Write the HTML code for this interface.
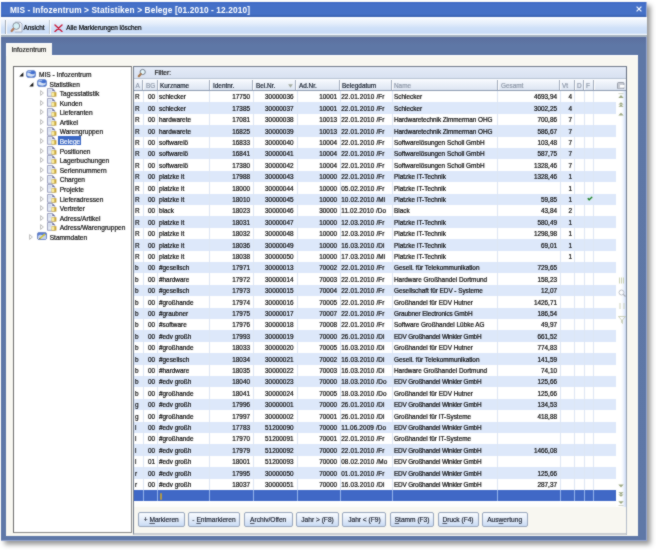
<!DOCTYPE html>
<html><head><meta charset="utf-8">
<style>
*{margin:0;padding:0;box-sizing:border-box}
html,body{width:656px;height:550px;overflow:hidden;background:#fff;font-family:"Liberation Sans",sans-serif;color:#000}
.a{position:absolute}
.tx{position:absolute;white-space:nowrap;line-height:1;-webkit-text-stroke:0.2px currentColor}
#shadowBox{left:1px;top:2px;width:646px;height:539px;background:#888;box-shadow:3px 3px 5px 0.5px rgba(0,0,0,0.42)}
#shadowR{left:647px;top:6px;width:6px;height:535px;background:linear-gradient(90deg,#8c8c8c,#c4c4c4 45%,#fff)}
#shadowB{left:5px;top:541px;width:642px;height:5px;background:linear-gradient(180deg,#8c8c8c,#c4c4c4 45%,#fff)}#shadowC{left:647px;top:541px;width:6px;height:5px;background:radial-gradient(circle at 0 0,#8c8c8c,#c4c4c4 45%,#fff 90%)}
#title{left:1px;top:2px;width:646px;height:15px;background:linear-gradient(180deg,#3d68c4,#4570c8 15%,#4571c6 80%,#3a62b0)}
#tb{left:1px;top:17px;width:646px;height:20px;background:linear-gradient(180deg,#ffffff 0,#f4f8fe 10%,#e6effb 30%,#cfe0f8 55%,#c9dcf7 80%,#dce8f8 86%,#fdfeff 88%,#fdfeff 90%,#a6b3c0 91%,#aab6c2 100%)}
#frame{left:1px;top:37px;width:646px;height:504px;background:linear-gradient(180deg,#5c6f9e,#5e77a6 8px,#5f78a7);border-right:1px solid #93a3cc;border-bottom:1px solid #93a3cc}
#tab{left:6px;top:43px;width:46px;height:13px;background:#f7f6f1;border-top:1px solid #fff;border-left:1px solid #fff}
#content{left:6px;top:55px;width:632px;height:481px;background:#f8f7f1;border-top:1px solid #fff}
#tree{left:13px;top:66px;width:119px;height:467px;background:#fff;border:1px solid #6d6d6d;border-right-color:#8a8a8a;border-bottom-color:#8a8a8a}
#grid{left:133px;top:66px;width:494px;height:469px;background:#f8f7f1;border:1px solid #727c8c;border-bottom:2px solid #c9cdd2}
#filter{left:134px;top:67px;width:492px;height:12px;background:linear-gradient(180deg,#e4ebf7,#d8e1f1);border-bottom:1px solid #b8c4d4}
#hdr{left:134px;top:79px;width:492px;height:12px;background:linear-gradient(180deg,#fbfcff,#eef3fa 35%,#dde5f2);border-bottom:1px solid #8f9cb2}
.hs{position:absolute;top:80px;width:2px;height:10px;background:#a3adbd;border-right:1px solid #fff}
.row{position:absolute;left:134px;width:482px}
.vl{position:absolute;width:1px;background:#dde6f4}
.c{font-size:6.4px;color:#0a0a0a}
.h{font-size:6.4px;color:#18202e}
.hg{font-size:6.4px;color:#8e98a8}
#rstrip{left:616px;top:91px;width:10px;height:416px;background:linear-gradient(90deg,#fff 0,#fff 50%,#f2f6fd 70%,#ccdaf4 100%)}
.btn{position:absolute;top:512px;height:15px;border:1px solid #98a6bd;border-radius:2px;background:linear-gradient(180deg,#f8fbff,#e6eefa 45%,#c9dbf4);font-size:6.6px;color:#141a28;text-align:center;line-height:14px;white-space:nowrap;-webkit-text-stroke:0.15px #141a28}.btn u{text-decoration:underline;text-decoration-thickness:0.6px;text-decoration-color:#505868;text-underline-offset:0.6px}
#root{position:absolute;left:0;top:0;width:656px;height:550px;overflow:hidden;background:#fff;will-change:transform}
#root{filter:url(#bl)}
</style></head><body><svg width="0" height="0" style="position:absolute"><filter id="bl" x="0" y="0" width="100%" height="100%" color-interpolation-filters="sRGB"><feConvolveMatrix order="3" kernelMatrix="1 2 1 2 16 2 1 2 1" divisor="28" edgeMode="duplicate"/></filter></svg><div id="root">

<div class="a" id="shadowBox"></div>
<div class="a" id="title"></div>
<div class="tx" style="left:10px;top:5.5px;font-weight:bold;font-size:8.3px;letter-spacing:0.12px;color:#fff;-webkit-text-stroke:0">MIS - Infozentrum &gt; Statistiken &gt; Belege [01.2010 - 12.2010]</div>
<svg class="a" style="left:636.4px;top:6.4px" width="6" height="6" viewBox="0 0 6 6"><path d="M0.6 0.6 L5.4 5.4 M5.4 0.6 L0.6 5.4" stroke="#f4f8ff" stroke-width="1.25"/></svg>
<div class="a" style="left:646px;top:2px;width:1px;height:539px;background:#9aaad6"></div>
<div class="a" id="tb"></div>
<div class="a" id="frame"></div>
<div class="a" id="content"></div>
<div class="a" id="tab"></div>
<div class="tx" style="left:11.5px;top:47px;font-size:6.6px;color:#222">Infozentrum</div>
<div class="tx" style="left:23.5px;top:24.6px;font-size:6.4px">Ansicht</div>
<div class="tx" style="left:66.3px;top:24.6px;font-size:6.4px">Alle Markierungen löschen</div>
<div class="a" id="tree"></div>
<div class="a" id="grid"></div>
<div class="a" id="filter"></div>
<div class="tx" style="left:154.5px;top:70px;font-size:6.6px;color:#1a1a1a">Filter:</div>
<div class="a" id="hdr"></div>
<div class="hs" style="left:142.0px"></div>
<div class="hs" style="left:157.0px"></div>
<div class="hs" style="left:209.0px"></div>
<div class="hs" style="left:252.0px"></div>
<div class="hs" style="left:295.0px"></div>
<div class="hs" style="left:339.0px"></div>
<div class="hs" style="left:391.0px"></div>
<div class="hs" style="left:497.0px"></div>
<div class="hs" style="left:559.0px"></div>
<div class="hs" style="left:574.0px"></div>
<div class="hs" style="left:583.0px"></div>
<div class="hs" style="left:593.0px"></div>
<div class="tx hg" style="left:135.5px;top:82.5px">A</div>
<div class="tx hg" style="left:146.0px;top:82.5px">BG</div>
<div class="tx h" style="left:160.0px;top:82.5px">Kurzname</div>
<div class="tx h" style="left:213.0px;top:82.5px">Identnr.</div>
<div class="tx h" style="left:256.0px;top:82.5px">Bel.Nr.</div>
<div class="tx h" style="left:299.0px;top:82.5px">Ad.Nr.</div>
<div class="tx h" style="left:342.0px;top:82.5px">Belegdatum</div>
<div class="tx hg" style="left:394.0px;top:82.5px">Name</div>
<div class="tx hg" style="left:501.0px;top:82.5px">Gesamt</div>
<div class="tx hg" style="left:562.0px;top:82.5px">Vt</div>
<div class="tx hg" style="left:577.0px;top:82.5px">D</div>
<div class="tx hg" style="left:586.0px;top:82.5px">F</div>
<svg class="a" style="left:287.5px;top:84px" width="5" height="4" viewBox="0 0 5 4"><path d="M0.2 0.2 H4.8 L2.5 3.8Z" fill="#a2a99c"/></svg>
<div class="row" style="top:91.00px;height:11.40px;background:#ffffff"></div>
<div class="tx c" style="left:135.0px;top:94.30px">R</div>
<div class="tx c" style="right:501.0px;top:94.30px">00</div>
<div class="tx c" style="left:159.0px;top:94.30px">schlecker</div>
<div class="tx c" style="right:406.0px;top:94.30px">17750</div>
<div class="tx c" style="right:362.5px;top:94.30px">30000036</div>
<div class="tx c" style="right:319.0px;top:94.30px">10001</div>
<div class="tx c" style="left:341.2px;top:94.30px;letter-spacing:0.13px">22.01.2010 /Fr</div>
<div class="tx c" style="left:394px;top:94.30px;letter-spacing:0px">Schlecker</div>
<div class="tx c" style="right:99.0px;top:94.30px">4693,94</div>
<div class="tx c" style="right:84.0px;top:94.30px">4</div>
<div class="row" style="top:102.40px;height:11.40px;background:#dde8fa"></div>
<div class="tx c" style="left:135.0px;top:105.70px">R</div>
<div class="tx c" style="right:501.0px;top:105.70px">00</div>
<div class="tx c" style="left:159.0px;top:105.70px">schlecker</div>
<div class="tx c" style="right:406.0px;top:105.70px">17385</div>
<div class="tx c" style="right:362.5px;top:105.70px">30000037</div>
<div class="tx c" style="right:319.0px;top:105.70px">10001</div>
<div class="tx c" style="left:341.2px;top:105.70px;letter-spacing:0.13px">22.01.2010 /Fr</div>
<div class="tx c" style="left:394px;top:105.70px;letter-spacing:0px">Schlecker</div>
<div class="tx c" style="right:99.0px;top:105.70px">3002,25</div>
<div class="tx c" style="right:84.0px;top:105.70px">4</div>
<div class="row" style="top:113.80px;height:11.40px;background:#ffffff"></div>
<div class="tx c" style="left:135.0px;top:117.10px">R</div>
<div class="tx c" style="right:501.0px;top:117.10px">00</div>
<div class="tx c" style="left:159.0px;top:117.10px">hardwarete</div>
<div class="tx c" style="right:406.0px;top:117.10px">17081</div>
<div class="tx c" style="right:362.5px;top:117.10px">30000038</div>
<div class="tx c" style="right:319.0px;top:117.10px">10013</div>
<div class="tx c" style="left:341.2px;top:117.10px;letter-spacing:0.13px">22.01.2010 /Fr</div>
<div class="tx c" style="left:394px;top:117.10px;letter-spacing:-0.06px">Hardwaretechnik Zimmerman OHG</div>
<div class="tx c" style="right:99.0px;top:117.10px">700,86</div>
<div class="tx c" style="right:84.0px;top:117.10px">7</div>
<div class="row" style="top:125.20px;height:11.40px;background:#dde8fa"></div>
<div class="tx c" style="left:135.0px;top:128.50px">R</div>
<div class="tx c" style="right:501.0px;top:128.50px">00</div>
<div class="tx c" style="left:159.0px;top:128.50px">hardwarete</div>
<div class="tx c" style="right:406.0px;top:128.50px">16825</div>
<div class="tx c" style="right:362.5px;top:128.50px">30000039</div>
<div class="tx c" style="right:319.0px;top:128.50px">10013</div>
<div class="tx c" style="left:341.2px;top:128.50px;letter-spacing:0.13px">22.01.2010 /Fr</div>
<div class="tx c" style="left:394px;top:128.50px;letter-spacing:-0.06px">Hardwaretechnik Zimmerman OHG</div>
<div class="tx c" style="right:99.0px;top:128.50px">586,67</div>
<div class="tx c" style="right:84.0px;top:128.50px">7</div>
<div class="row" style="top:136.60px;height:11.40px;background:#ffffff"></div>
<div class="tx c" style="left:135.0px;top:139.90px">R</div>
<div class="tx c" style="right:501.0px;top:139.90px">00</div>
<div class="tx c" style="left:159.0px;top:139.90px">softwarelö</div>
<div class="tx c" style="right:406.0px;top:139.90px">16833</div>
<div class="tx c" style="right:362.5px;top:139.90px">30000040</div>
<div class="tx c" style="right:319.0px;top:139.90px">10004</div>
<div class="tx c" style="left:341.2px;top:139.90px;letter-spacing:0.13px">22.01.2010 /Fr</div>
<div class="tx c" style="left:394px;top:139.90px;letter-spacing:0px">Softwarelösungen Scholl GmbH</div>
<div class="tx c" style="right:99.0px;top:139.90px">103,48</div>
<div class="tx c" style="right:84.0px;top:139.90px">7</div>
<div class="row" style="top:148.00px;height:11.40px;background:#dde8fa"></div>
<div class="tx c" style="left:135.0px;top:151.30px">R</div>
<div class="tx c" style="right:501.0px;top:151.30px">00</div>
<div class="tx c" style="left:159.0px;top:151.30px">softwarelö</div>
<div class="tx c" style="right:406.0px;top:151.30px">16841</div>
<div class="tx c" style="right:362.5px;top:151.30px">30000041</div>
<div class="tx c" style="right:319.0px;top:151.30px">10004</div>
<div class="tx c" style="left:341.2px;top:151.30px;letter-spacing:0.13px">22.01.2010 /Fr</div>
<div class="tx c" style="left:394px;top:151.30px;letter-spacing:0px">Softwarelösungen Scholl GmbH</div>
<div class="tx c" style="right:99.0px;top:151.30px">587,75</div>
<div class="tx c" style="right:84.0px;top:151.30px">7</div>
<div class="row" style="top:159.40px;height:11.40px;background:#ffffff"></div>
<div class="tx c" style="left:135.0px;top:162.70px">R</div>
<div class="tx c" style="right:501.0px;top:162.70px">00</div>
<div class="tx c" style="left:159.0px;top:162.70px">softwarelö</div>
<div class="tx c" style="right:406.0px;top:162.70px">17380</div>
<div class="tx c" style="right:362.5px;top:162.70px">30000042</div>
<div class="tx c" style="right:319.0px;top:162.70px">10004</div>
<div class="tx c" style="left:341.2px;top:162.70px;letter-spacing:0.13px">22.01.2010 /Fr</div>
<div class="tx c" style="left:394px;top:162.70px;letter-spacing:0px">Softwarelösungen Scholl GmbH</div>
<div class="tx c" style="right:99.0px;top:162.70px">1328,46</div>
<div class="tx c" style="right:84.0px;top:162.70px">7</div>
<div class="row" style="top:170.80px;height:11.40px;background:#dde8fa"></div>
<div class="tx c" style="left:135.0px;top:174.10px">R</div>
<div class="tx c" style="right:501.0px;top:174.10px">00</div>
<div class="tx c" style="left:159.0px;top:174.10px">platzke it</div>
<div class="tx c" style="right:406.0px;top:174.10px">17988</div>
<div class="tx c" style="right:362.5px;top:174.10px">30000043</div>
<div class="tx c" style="right:319.0px;top:174.10px">10000</div>
<div class="tx c" style="left:341.2px;top:174.10px;letter-spacing:0.13px">22.01.2010 /Fr</div>
<div class="tx c" style="left:394px;top:174.10px;letter-spacing:0px">Platzke IT-Technik</div>
<div class="tx c" style="right:99.0px;top:174.10px">1328,46</div>
<div class="tx c" style="right:84.0px;top:174.10px">1</div>
<div class="row" style="top:182.20px;height:11.40px;background:#ffffff"></div>
<div class="tx c" style="left:135.0px;top:185.50px">R</div>
<div class="tx c" style="right:501.0px;top:185.50px">00</div>
<div class="tx c" style="left:159.0px;top:185.50px">platzke it</div>
<div class="tx c" style="right:406.0px;top:185.50px">18000</div>
<div class="tx c" style="right:362.5px;top:185.50px">30000044</div>
<div class="tx c" style="right:319.0px;top:185.50px">10000</div>
<div class="tx c" style="left:341.2px;top:185.50px;letter-spacing:0.13px">05.02.2010 /Fr</div>
<div class="tx c" style="left:394px;top:185.50px;letter-spacing:0px">Platzke IT-Technik</div>
<div class="tx c" style="right:84.0px;top:185.50px">1</div>
<div class="row" style="top:193.60px;height:11.40px;background:#dde8fa"></div>
<div class="tx c" style="left:135.0px;top:196.90px">R</div>
<div class="tx c" style="right:501.0px;top:196.90px">00</div>
<div class="tx c" style="left:159.0px;top:196.90px">platzke it</div>
<div class="tx c" style="right:406.0px;top:196.90px">18010</div>
<div class="tx c" style="right:362.5px;top:196.90px">30000045</div>
<div class="tx c" style="right:319.0px;top:196.90px">10000</div>
<div class="tx c" style="left:341.2px;top:196.90px;letter-spacing:0.13px">10.02.2010 /Mi</div>
<div class="tx c" style="left:394px;top:196.90px;letter-spacing:0px">Platzke IT-Technik</div>
<div class="tx c" style="right:99.0px;top:196.90px">59,85</div>
<div class="tx c" style="right:84.0px;top:196.90px">1</div>
<svg class="a" style="left:586.6px;top:196.20px" width="6" height="5" viewBox="0 0 6 5"><path d="M0.8 2.2 L2.2 3.8 L5.2 0.9" stroke="#b8f0b8" stroke-width="2.2" fill="none" opacity="0.6"/><path d="M0.8 2.2 L2.2 3.8 L5.2 0.9" stroke="#1f7a2e" stroke-width="1.3" fill="none"/></svg>
<div class="row" style="top:205.00px;height:11.40px;background:#ffffff"></div>
<div class="tx c" style="left:135.0px;top:208.30px">R</div>
<div class="tx c" style="right:501.0px;top:208.30px">00</div>
<div class="tx c" style="left:159.0px;top:208.30px">black</div>
<div class="tx c" style="right:406.0px;top:208.30px">18023</div>
<div class="tx c" style="right:362.5px;top:208.30px">30000046</div>
<div class="tx c" style="right:319.0px;top:208.30px">30000</div>
<div class="tx c" style="left:341.2px;top:208.30px;letter-spacing:0.13px">11.02.2010 /Do</div>
<div class="tx c" style="left:394px;top:208.30px;letter-spacing:0px">Black</div>
<div class="tx c" style="right:99.0px;top:208.30px">43,84</div>
<div class="tx c" style="right:84.0px;top:208.30px">2</div>
<div class="row" style="top:216.40px;height:11.40px;background:#dde8fa"></div>
<div class="tx c" style="left:135.0px;top:219.70px">R</div>
<div class="tx c" style="right:501.0px;top:219.70px">00</div>
<div class="tx c" style="left:159.0px;top:219.70px">platzke it</div>
<div class="tx c" style="right:406.0px;top:219.70px">18031</div>
<div class="tx c" style="right:362.5px;top:219.70px">30000047</div>
<div class="tx c" style="right:319.0px;top:219.70px">10000</div>
<div class="tx c" style="left:341.2px;top:219.70px;letter-spacing:0.13px">12.03.2010 /Fr</div>
<div class="tx c" style="left:394px;top:219.70px;letter-spacing:0px">Platzke IT-Technik</div>
<div class="tx c" style="right:99.0px;top:219.70px">580,49</div>
<div class="tx c" style="right:84.0px;top:219.70px">1</div>
<div class="row" style="top:227.80px;height:11.40px;background:#ffffff"></div>
<div class="tx c" style="left:135.0px;top:231.10px">R</div>
<div class="tx c" style="right:501.0px;top:231.10px">00</div>
<div class="tx c" style="left:159.0px;top:231.10px">platzke it</div>
<div class="tx c" style="right:406.0px;top:231.10px">18032</div>
<div class="tx c" style="right:362.5px;top:231.10px">30000048</div>
<div class="tx c" style="right:319.0px;top:231.10px">10000</div>
<div class="tx c" style="left:341.2px;top:231.10px;letter-spacing:0.13px">12.03.2010 /Fr</div>
<div class="tx c" style="left:394px;top:231.10px;letter-spacing:0px">Platzke IT-Technik</div>
<div class="tx c" style="right:99.0px;top:231.10px">1298,98</div>
<div class="tx c" style="right:84.0px;top:231.10px">1</div>
<div class="row" style="top:239.20px;height:11.40px;background:#dde8fa"></div>
<div class="tx c" style="left:135.0px;top:242.50px">R</div>
<div class="tx c" style="right:501.0px;top:242.50px">00</div>
<div class="tx c" style="left:159.0px;top:242.50px">platzke it</div>
<div class="tx c" style="right:406.0px;top:242.50px">18036</div>
<div class="tx c" style="right:362.5px;top:242.50px">30000049</div>
<div class="tx c" style="right:319.0px;top:242.50px">10000</div>
<div class="tx c" style="left:341.2px;top:242.50px;letter-spacing:0.13px">16.03.2010 /Di</div>
<div class="tx c" style="left:394px;top:242.50px;letter-spacing:0px">Platzke IT-Technik</div>
<div class="tx c" style="right:99.0px;top:242.50px">69,01</div>
<div class="tx c" style="right:84.0px;top:242.50px">1</div>
<div class="row" style="top:250.60px;height:11.40px;background:#ffffff"></div>
<div class="tx c" style="left:135.0px;top:253.90px">R</div>
<div class="tx c" style="right:501.0px;top:253.90px">00</div>
<div class="tx c" style="left:159.0px;top:253.90px">platzke it</div>
<div class="tx c" style="right:406.0px;top:253.90px">18038</div>
<div class="tx c" style="right:362.5px;top:253.90px">30000050</div>
<div class="tx c" style="right:319.0px;top:253.90px">10000</div>
<div class="tx c" style="left:341.2px;top:253.90px;letter-spacing:0.13px">17.03.2010 /Mi</div>
<div class="tx c" style="left:394px;top:253.90px;letter-spacing:0px">Platzke IT-Technik</div>
<div class="tx c" style="right:84.0px;top:253.90px">1</div>
<div class="row" style="top:262.00px;height:11.40px;background:#dde8fa"></div>
<div class="tx c" style="left:135.0px;top:265.30px">b</div>
<div class="tx c" style="right:501.0px;top:265.30px">00</div>
<div class="tx c" style="left:159.0px;top:265.30px">#gesellsch</div>
<div class="tx c" style="right:406.0px;top:265.30px">17971</div>
<div class="tx c" style="right:362.5px;top:265.30px">30000013</div>
<div class="tx c" style="right:319.0px;top:265.30px">70002</div>
<div class="tx c" style="left:341.2px;top:265.30px;letter-spacing:0.13px">22.01.2010 /Fr</div>
<div class="tx c" style="left:394px;top:265.30px;letter-spacing:0px">Gesell. für Telekommunikation</div>
<div class="tx c" style="right:99.0px;top:265.30px">729,65</div>
<div class="row" style="top:273.40px;height:11.40px;background:#ffffff"></div>
<div class="tx c" style="left:135.0px;top:276.70px">b</div>
<div class="tx c" style="right:501.0px;top:276.70px">00</div>
<div class="tx c" style="left:159.0px;top:276.70px">#hardware</div>
<div class="tx c" style="right:406.0px;top:276.70px">17972</div>
<div class="tx c" style="right:362.5px;top:276.70px">30000014</div>
<div class="tx c" style="right:319.0px;top:276.70px">70003</div>
<div class="tx c" style="left:341.2px;top:276.70px;letter-spacing:0.13px">22.01.2010 /Fr</div>
<div class="tx c" style="left:394px;top:276.70px;letter-spacing:0px">Hardware Großhandel Dortmund</div>
<div class="tx c" style="right:99.0px;top:276.70px">158,23</div>
<div class="row" style="top:284.80px;height:11.40px;background:#dde8fa"></div>
<div class="tx c" style="left:135.0px;top:288.10px">b</div>
<div class="tx c" style="right:501.0px;top:288.10px">00</div>
<div class="tx c" style="left:159.0px;top:288.10px">#gesellsch</div>
<div class="tx c" style="right:406.0px;top:288.10px">17973</div>
<div class="tx c" style="right:362.5px;top:288.10px">30000015</div>
<div class="tx c" style="right:319.0px;top:288.10px">70004</div>
<div class="tx c" style="left:341.2px;top:288.10px;letter-spacing:0.13px">22.01.2010 /Fr</div>
<div class="tx c" style="left:394px;top:288.10px;letter-spacing:-0.035px">Gesellschaft für EDV - Systeme</div>
<div class="tx c" style="right:99.0px;top:288.10px">12,07</div>
<div class="row" style="top:296.20px;height:11.40px;background:#ffffff"></div>
<div class="tx c" style="left:135.0px;top:299.50px">b</div>
<div class="tx c" style="right:501.0px;top:299.50px">00</div>
<div class="tx c" style="left:159.0px;top:299.50px">#großhande</div>
<div class="tx c" style="right:406.0px;top:299.50px">17974</div>
<div class="tx c" style="right:362.5px;top:299.50px">30000016</div>
<div class="tx c" style="right:319.0px;top:299.50px">70005</div>
<div class="tx c" style="left:341.2px;top:299.50px;letter-spacing:0.13px">22.01.2010 /Fr</div>
<div class="tx c" style="left:394px;top:299.50px;letter-spacing:0px">Großhandel für EDV Hutner</div>
<div class="tx c" style="right:99.0px;top:299.50px">1426,71</div>
<div class="row" style="top:307.60px;height:11.40px;background:#dde8fa"></div>
<div class="tx c" style="left:135.0px;top:310.90px">b</div>
<div class="tx c" style="right:501.0px;top:310.90px">00</div>
<div class="tx c" style="left:159.0px;top:310.90px">#graubner</div>
<div class="tx c" style="right:406.0px;top:310.90px">17975</div>
<div class="tx c" style="right:362.5px;top:310.90px">30000017</div>
<div class="tx c" style="right:319.0px;top:310.90px">70007</div>
<div class="tx c" style="left:341.2px;top:310.90px;letter-spacing:0.13px">22.01.2010 /Fr</div>
<div class="tx c" style="left:394px;top:310.90px;letter-spacing:-0.07px">Graubner Electronics GmbH</div>
<div class="tx c" style="right:99.0px;top:310.90px">186,54</div>
<div class="row" style="top:319.00px;height:11.40px;background:#ffffff"></div>
<div class="tx c" style="left:135.0px;top:322.30px">b</div>
<div class="tx c" style="right:501.0px;top:322.30px">00</div>
<div class="tx c" style="left:159.0px;top:322.30px">#software</div>
<div class="tx c" style="right:406.0px;top:322.30px">17976</div>
<div class="tx c" style="right:362.5px;top:322.30px">30000018</div>
<div class="tx c" style="right:319.0px;top:322.30px">70008</div>
<div class="tx c" style="left:341.2px;top:322.30px;letter-spacing:0.13px">22.01.2010 /Fr</div>
<div class="tx c" style="left:394px;top:322.30px;letter-spacing:0px">Software Großhandel Lübke AG</div>
<div class="tx c" style="right:99.0px;top:322.30px">49,97</div>
<div class="row" style="top:330.40px;height:11.40px;background:#dde8fa"></div>
<div class="tx c" style="left:135.0px;top:333.70px">b</div>
<div class="tx c" style="right:501.0px;top:333.70px">00</div>
<div class="tx c" style="left:159.0px;top:333.70px">#edv großh</div>
<div class="tx c" style="right:406.0px;top:333.70px">17993</div>
<div class="tx c" style="right:362.5px;top:333.70px">30000019</div>
<div class="tx c" style="right:319.0px;top:333.70px">70000</div>
<div class="tx c" style="left:341.2px;top:333.70px;letter-spacing:0.13px">26.01.2010 /Di</div>
<div class="tx c" style="left:394px;top:333.70px;letter-spacing:-0.17px">EDV Großhandel Winkler GmbH</div>
<div class="tx c" style="right:99.0px;top:333.70px">661,52</div>
<div class="row" style="top:341.80px;height:11.40px;background:#ffffff"></div>
<div class="tx c" style="left:135.0px;top:345.10px">b</div>
<div class="tx c" style="right:501.0px;top:345.10px">00</div>
<div class="tx c" style="left:159.0px;top:345.10px">#großhande</div>
<div class="tx c" style="right:406.0px;top:345.10px">18033</div>
<div class="tx c" style="right:362.5px;top:345.10px">30000020</div>
<div class="tx c" style="right:319.0px;top:345.10px">70005</div>
<div class="tx c" style="left:341.2px;top:345.10px;letter-spacing:0.13px">16.03.2010 /Di</div>
<div class="tx c" style="left:394px;top:345.10px;letter-spacing:0px">Großhandel für EDV Hutner</div>
<div class="tx c" style="right:99.0px;top:345.10px">774,83</div>
<div class="row" style="top:353.20px;height:11.40px;background:#dde8fa"></div>
<div class="tx c" style="left:135.0px;top:356.50px">b</div>
<div class="tx c" style="right:501.0px;top:356.50px">00</div>
<div class="tx c" style="left:159.0px;top:356.50px">#gesellsch</div>
<div class="tx c" style="right:406.0px;top:356.50px">18034</div>
<div class="tx c" style="right:362.5px;top:356.50px">30000021</div>
<div class="tx c" style="right:319.0px;top:356.50px">70002</div>
<div class="tx c" style="left:341.2px;top:356.50px;letter-spacing:0.13px">16.03.2010 /Di</div>
<div class="tx c" style="left:394px;top:356.50px;letter-spacing:0px">Gesell. für Telekommunikation</div>
<div class="tx c" style="right:99.0px;top:356.50px">141,59</div>
<div class="row" style="top:364.60px;height:11.40px;background:#ffffff"></div>
<div class="tx c" style="left:135.0px;top:367.90px">b</div>
<div class="tx c" style="right:501.0px;top:367.90px">00</div>
<div class="tx c" style="left:159.0px;top:367.90px">#hardware</div>
<div class="tx c" style="right:406.0px;top:367.90px">18035</div>
<div class="tx c" style="right:362.5px;top:367.90px">30000022</div>
<div class="tx c" style="right:319.0px;top:367.90px">70003</div>
<div class="tx c" style="left:341.2px;top:367.90px;letter-spacing:0.13px">16.03.2010 /Di</div>
<div class="tx c" style="left:394px;top:367.90px;letter-spacing:0px">Hardware Großhandel Dortmund</div>
<div class="tx c" style="right:99.0px;top:367.90px">74,10</div>
<div class="row" style="top:376.00px;height:11.40px;background:#dde8fa"></div>
<div class="tx c" style="left:135.0px;top:379.30px">b</div>
<div class="tx c" style="right:501.0px;top:379.30px">00</div>
<div class="tx c" style="left:159.0px;top:379.30px">#edv großh</div>
<div class="tx c" style="right:406.0px;top:379.30px">18040</div>
<div class="tx c" style="right:362.5px;top:379.30px">30000023</div>
<div class="tx c" style="right:319.0px;top:379.30px">70000</div>
<div class="tx c" style="left:341.2px;top:379.30px;letter-spacing:0.13px">18.03.2010 /Do</div>
<div class="tx c" style="left:394px;top:379.30px;letter-spacing:-0.17px">EDV Großhandel Winkler GmbH</div>
<div class="tx c" style="right:99.0px;top:379.30px">125,66</div>
<div class="row" style="top:387.40px;height:11.40px;background:#ffffff"></div>
<div class="tx c" style="left:135.0px;top:390.70px">b</div>
<div class="tx c" style="right:501.0px;top:390.70px">00</div>
<div class="tx c" style="left:159.0px;top:390.70px">#großhande</div>
<div class="tx c" style="right:406.0px;top:390.70px">18041</div>
<div class="tx c" style="right:362.5px;top:390.70px">30000024</div>
<div class="tx c" style="right:319.0px;top:390.70px">70005</div>
<div class="tx c" style="left:341.2px;top:390.70px;letter-spacing:0.13px">18.03.2010 /Do</div>
<div class="tx c" style="left:394px;top:390.70px;letter-spacing:0px">Großhandel für EDV Hutner</div>
<div class="tx c" style="right:99.0px;top:390.70px">125,66</div>
<div class="row" style="top:398.80px;height:11.40px;background:#dde8fa"></div>
<div class="tx c" style="left:135.0px;top:402.10px">g</div>
<div class="tx c" style="right:501.0px;top:402.10px">00</div>
<div class="tx c" style="left:159.0px;top:402.10px">#edv großh</div>
<div class="tx c" style="right:406.0px;top:402.10px">17996</div>
<div class="tx c" style="right:362.5px;top:402.10px">30000001</div>
<div class="tx c" style="right:319.0px;top:402.10px">70000</div>
<div class="tx c" style="left:341.2px;top:402.10px;letter-spacing:0.13px">26.01.2010 /Di</div>
<div class="tx c" style="left:394px;top:402.10px;letter-spacing:-0.17px">EDV Großhandel Winkler GmbH</div>
<div class="tx c" style="right:99.0px;top:402.10px">134,53</div>
<div class="row" style="top:410.20px;height:11.40px;background:#ffffff"></div>
<div class="tx c" style="left:135.0px;top:413.50px">g</div>
<div class="tx c" style="right:501.0px;top:413.50px">00</div>
<div class="tx c" style="left:159.0px;top:413.50px">#großhande</div>
<div class="tx c" style="right:406.0px;top:413.50px">17997</div>
<div class="tx c" style="right:362.5px;top:413.50px">30000002</div>
<div class="tx c" style="right:319.0px;top:413.50px">70001</div>
<div class="tx c" style="left:341.2px;top:413.50px;letter-spacing:0.13px">26.01.2010 /Di</div>
<div class="tx c" style="left:394px;top:413.50px;letter-spacing:0px">Großhandel für IT-Systeme</div>
<div class="tx c" style="right:99.0px;top:413.50px">418,88</div>
<div class="row" style="top:421.60px;height:11.40px;background:#dde8fa"></div>
<div class="tx c" style="left:135.0px;top:424.90px">l</div>
<div class="tx c" style="right:501.0px;top:424.90px">00</div>
<div class="tx c" style="left:159.0px;top:424.90px">#edv großh</div>
<div class="tx c" style="right:406.0px;top:424.90px">17783</div>
<div class="tx c" style="right:362.5px;top:424.90px">51200090</div>
<div class="tx c" style="right:319.0px;top:424.90px">70000</div>
<div class="tx c" style="left:341.2px;top:424.90px;letter-spacing:0.13px">11.06.2009 /Do</div>
<div class="tx c" style="left:394px;top:424.90px;letter-spacing:-0.17px">EDV Großhandel Winkler GmbH</div>
<div class="row" style="top:433.00px;height:11.40px;background:#ffffff"></div>
<div class="tx c" style="left:135.0px;top:436.30px">l</div>
<div class="tx c" style="right:501.0px;top:436.30px">00</div>
<div class="tx c" style="left:159.0px;top:436.30px">#großhande</div>
<div class="tx c" style="right:406.0px;top:436.30px">17970</div>
<div class="tx c" style="right:362.5px;top:436.30px">51200091</div>
<div class="tx c" style="right:319.0px;top:436.30px">70001</div>
<div class="tx c" style="left:341.2px;top:436.30px;letter-spacing:0.13px">22.01.2010 /Fr</div>
<div class="tx c" style="left:394px;top:436.30px;letter-spacing:0px">Großhandel für IT-Systeme</div>
<div class="row" style="top:444.40px;height:11.40px;background:#dde8fa"></div>
<div class="tx c" style="left:135.0px;top:447.70px">l</div>
<div class="tx c" style="right:501.0px;top:447.70px">00</div>
<div class="tx c" style="left:159.0px;top:447.70px">#edv großh</div>
<div class="tx c" style="right:406.0px;top:447.70px">17979</div>
<div class="tx c" style="right:362.5px;top:447.70px">51200092</div>
<div class="tx c" style="right:319.0px;top:447.70px">70000</div>
<div class="tx c" style="left:341.2px;top:447.70px;letter-spacing:0.13px">22.01.2010 /Fr</div>
<div class="tx c" style="left:394px;top:447.70px;letter-spacing:-0.17px">EDV Großhandel Winkler GmbH</div>
<div class="tx c" style="right:99.0px;top:447.70px">1466,08</div>
<div class="row" style="top:455.80px;height:11.40px;background:#ffffff"></div>
<div class="tx c" style="left:135.0px;top:459.10px">l</div>
<div class="tx c" style="right:501.0px;top:459.10px">01</div>
<div class="tx c" style="left:159.0px;top:459.10px">#edv großh</div>
<div class="tx c" style="right:406.0px;top:459.10px">18001</div>
<div class="tx c" style="right:362.5px;top:459.10px">51200093</div>
<div class="tx c" style="right:319.0px;top:459.10px">70000</div>
<div class="tx c" style="left:341.2px;top:459.10px;letter-spacing:0.13px">08.02.2010 /Mo</div>
<div class="tx c" style="left:394px;top:459.10px;letter-spacing:-0.17px">EDV Großhandel Winkler GmbH</div>
<div class="row" style="top:467.20px;height:11.40px;background:#dde8fa"></div>
<div class="tx c" style="left:135.0px;top:470.50px">r</div>
<div class="tx c" style="right:501.0px;top:470.50px">00</div>
<div class="tx c" style="left:159.0px;top:470.50px">#edv großh</div>
<div class="tx c" style="right:406.0px;top:470.50px">17995</div>
<div class="tx c" style="right:362.5px;top:470.50px">30000050</div>
<div class="tx c" style="right:319.0px;top:470.50px">70000</div>
<div class="tx c" style="left:341.2px;top:470.50px;letter-spacing:0.13px">01.01.2010 /Fr</div>
<div class="tx c" style="left:394px;top:470.50px;letter-spacing:-0.17px">EDV Großhandel Winkler GmbH</div>
<div class="tx c" style="right:99.0px;top:470.50px">125,66</div>
<div class="row" style="top:478.60px;height:11.40px;background:#ffffff"></div>
<div class="tx c" style="left:135.0px;top:481.90px">r</div>
<div class="tx c" style="right:501.0px;top:481.90px">00</div>
<div class="tx c" style="left:159.0px;top:481.90px">#edv großh</div>
<div class="tx c" style="right:406.0px;top:481.90px">18037</div>
<div class="tx c" style="right:362.5px;top:481.90px">30000051</div>
<div class="tx c" style="right:319.0px;top:481.90px">70000</div>
<div class="tx c" style="left:341.2px;top:481.90px;letter-spacing:0.13px">16.03.2010 /Di</div>
<div class="tx c" style="left:394px;top:481.90px;letter-spacing:-0.17px">EDV Großhandel Winkler GmbH</div>
<div class="tx c" style="right:99.0px;top:481.90px">287,37</div>
<div class="row" style="top:490.00px;height:11.40px;background:#4068c6"></div>
<div class="vl" style="left:143.0px;top:91px;height:399.00px"></div>
<div class="vl" style="left:143.0px;top:490.00px;height:11.40px;background:#94b2ea"></div>
<div class="vl" style="left:157.0px;top:91px;height:399.00px"></div>
<div class="vl" style="left:157.0px;top:490.00px;height:11.40px;background:#94b2ea"></div>
<div class="vl" style="left:209.0px;top:91px;height:399.00px"></div>
<div class="vl" style="left:209.0px;top:490.00px;height:11.40px;background:#94b2ea"></div>
<div class="vl" style="left:253.0px;top:91px;height:399.00px"></div>
<div class="vl" style="left:253.0px;top:490.00px;height:11.40px;background:#94b2ea"></div>
<div class="vl" style="left:297.0px;top:91px;height:399.00px"></div>
<div class="vl" style="left:297.0px;top:490.00px;height:11.40px;background:#94b2ea"></div>
<div class="vl" style="left:340.0px;top:91px;height:399.00px"></div>
<div class="vl" style="left:340.0px;top:490.00px;height:11.40px;background:#94b2ea"></div>
<div class="vl" style="left:392.0px;top:91px;height:399.00px"></div>
<div class="vl" style="left:392.0px;top:490.00px;height:11.40px;background:#94b2ea"></div>
<div class="vl" style="left:497.0px;top:91px;height:399.00px"></div>
<div class="vl" style="left:497.0px;top:490.00px;height:11.40px;background:#94b2ea"></div>
<div class="vl" style="left:560.0px;top:91px;height:399.00px"></div>
<div class="vl" style="left:560.0px;top:490.00px;height:11.40px;background:#94b2ea"></div>
<div class="vl" style="left:574.0px;top:91px;height:399.00px"></div>
<div class="vl" style="left:574.0px;top:490.00px;height:11.40px;background:#94b2ea"></div>
<div class="vl" style="left:584.0px;top:91px;height:399.00px"></div>
<div class="vl" style="left:584.0px;top:490.00px;height:11.40px;background:#94b2ea"></div>
<div class="vl" style="left:593.0px;top:91px;height:399.00px"></div>
<div class="vl" style="left:593.0px;top:490.00px;height:11.40px;background:#94b2ea"></div>
<div class="a" style="left:134px;top:501px;width:482px;height:6px;background:linear-gradient(180deg,#fff,#fcfcfa)"></div>
<div class="a" id="rstrip"></div>
<div class="a" style="left:626px;top:67px;width:1px;height:467px;background:linear-gradient(180deg,#646e80,#7a889c 50%,#9aa6b6 85%,#b8c0cc)"></div>
<div class="a" style="left:159.8px;top:492.5px;width:1.8px;height:7.5px;background:#b09848;border-radius:1px"></div>
<div class="btn" style="left:138.0px;width:46.5px">+ <u>M</u>arkieren</div>
<div class="btn" style="left:187.6px;width:52.8px">- <u>E</u>ntmarkieren</div>
<div class="btn" style="left:243.8px;width:48.8px"><u>A</u>rchiv/Offen</div>
<div class="btn" style="left:295.7px;width:43.7px">Jahr &gt; (F8)</div>
<div class="btn" style="left:342.4px;width:44.0px">Jahr &lt; (F9)</div>
<div class="btn" style="left:389.9px;width:44.4px"><u>S</u>tamm (F3)</div>
<div class="btn" style="left:437.5px;width:41.0px"><u>D</u>ruck (F4)</div>
<div class="btn" style="left:481.5px;width:46.3px">Aus<u>w</u>ertung</div>
<div class="a" style="left:4.5px;top:20px;width:1px;height:14px;background:#a4acb6"></div>
<div class="a" style="left:6px;top:20px;width:1px;height:14px;background:#fff"></div>
<div class="a" style="left:48.5px;top:20px;width:1px;height:13.5px;background:#bcc6d0"></div>
<div class="a" style="left:49.5px;top:20px;width:1px;height:13.5px;background:#fff"></div>
<svg class="a" style="left:9.50px;top:21.00px;" width="13" height="12" viewBox="0 0 13 12"><path d="M5 1.2 H10.2 L12 3 V11 H5" fill="#eef2f8" stroke="#a0a8bc" stroke-width="0.9"/><circle cx="6.3" cy="5" r="3.4" fill="#d6f0f6" stroke="#8a929e" stroke-width="1"/><path d="M3.3 8 L1.6 10" stroke="#b47a58" stroke-width="2.2" stroke-linecap="round"/></svg>
<svg class="a" style="left:54.00px;top:23.80px;" width="9" height="8.5" viewBox="0 0 9 8.5"><path d="M1 1 L8 7.5 M8 1 L1 7.5" stroke="#c81a3a" stroke-width="1.4" stroke-linecap="round"/></svg>
<svg class="a" style="left:136.00px;top:67.50px;" width="11" height="10" viewBox="0 0 11 10"><circle cx="6.7" cy="4" r="2.6" fill="#e4f6fb" stroke="#6a7380" stroke-width="0.9"/><path d="M4.8 6 L2.8 8.2" stroke="#a8784e" stroke-width="2.2" stroke-linecap="round"/></svg>
<svg class="a" style="left:616.50px;top:81.50px;" width="8" height="7.5" viewBox="0 0 8 7.5"><rect x="0.5" y="0.5" width="6.5" height="6.5" rx="1" fill="#c8ccd4" stroke="#8a909c" stroke-width="0.8"/><rect x="3" y="3" width="4.5" height="2.5" fill="#fff"/></svg>
<svg class="a" style="left:618.20px;top:92.80px;" width="6" height="6" viewBox="0 0 6 6"><rect x="0.5" y="0.3" width="5" height="0.8" fill="#c4cab8"/><path d="M0.3 4.9 L3 2.1 L5.7 4.9Z" fill="#9ca882"/></svg>
<svg class="a" style="left:618.20px;top:102.40px;" width="6" height="5" viewBox="0 0 6 5"><path d="M0.4 2.4 L3 0.2 L5.6 2.4Z M0.4 4.8 L3 2.6 L5.6 4.8Z" fill="#9ca882"/></svg>
<svg class="a" style="left:618.20px;top:111.80px;" width="6" height="4" viewBox="0 0 6 4"><path d="M0.3 3.6 L3 0.8 L5.7 3.6Z" fill="#9ca882"/></svg>
<svg class="a" style="left:618.20px;top:483.60px;" width="6" height="4" viewBox="0 0 6 4"><path d="M0.3 0.6 L3 3.4 L5.7 0.6Z" fill="#9ca882"/></svg>
<svg class="a" style="left:618.20px;top:492.20px;" width="6" height="5" viewBox="0 0 6 5"><path d="M0.4 0.2 L3 2.4 L5.6 0.2Z M0.4 2.6 L3 4.8 L5.6 2.6Z" fill="#9ca882"/></svg>
<svg class="a" style="left:618.20px;top:500.80px;" width="6" height="6" viewBox="0 0 6 6"><path d="M0.3 0.3 L3 3.1 L5.7 0.3Z" fill="#9ca882"/><rect x="0.5" y="4.2" width="5" height="0.8" fill="#c4cab8"/></svg>
<svg class="a" style="left:618.00px;top:276.50px;" width="7" height="7" viewBox="0 0 7 7"><path d="M1.5 0.5 V6.5 M3.5 0.5 V6.5 M5.5 0.5 V6.5" stroke="#c4cca8" stroke-width="0.9"/></svg>
<svg class="a" style="left:617.50px;top:289.00px;" width="8" height="8" viewBox="0 0 8 8"><circle cx="3.5" cy="3.5" r="2.5" fill="none" stroke="#b8bcc4" stroke-width="0.9"/><path d="M5.3 5.3 L7.5 7.5" stroke="#a8acb4" stroke-width="1.2"/></svg>
<svg class="a" style="left:617.50px;top:303.00px;" width="8" height="7" viewBox="0 0 8 7"><path d="M1 1 L3 1 M1 3 L3 3 M1 5 L3 5 M5 1 L7 1 M5 3 L7 3 M5 5 L7 5" stroke="#c8cdb4" stroke-width="0.9"/></svg>
<svg class="a" style="left:617.50px;top:316.00px;" width="8" height="8" viewBox="0 0 8 8"><path d="M0.5 0.5 H7.5 L4.5 4 V7.5 L3.5 6.5 V4Z" fill="none" stroke="#c0c6ac" stroke-width="0.8"/></svg>
<svg class="a" style="left:19.10px;top:72.20px;" width="5" height="5" viewBox="0 0 5 5"><path d="M4.4 0.3 L4.4 4.4 L0.3 4.4Z" fill="#141414"/></svg>
<svg class="a" style="left:26.20px;top:69.80px;" width="10" height="8" viewBox="0 0 10 8"><defs><linearGradient id="dbg" x1="0" y1="0" x2="1" y2="1"><stop offset="0" stop-color="#7ea2e4"/><stop offset="0.5" stop-color="#3f6dd0"/><stop offset="1" stop-color="#5a7fd0"/></linearGradient></defs><rect x="0.4" y="0.4" width="9.2" height="7.2" rx="2.6" fill="url(#dbg)" stroke="#5577bb" stroke-width="0.6"/><path d="M1.2 3.2 Q2.5 2.2 4.2 3.6 Q6.5 5 8.8 3.4 L8.6 5.6 Q6.5 7.2 4 6.6 Q2 6.3 1.2 5.4Z" fill="#e6eef8" opacity="0.9"/><path d="M1.5 2.2 Q3 1 5 1.6" stroke="#c8d8f4" stroke-width="0.7" fill="none"/></svg>
<div class="tx" style="left:39.0px;top:72.00px;font-size:6.6px;color:#111">MIS - Infozentrum</div>
<svg class="a" style="left:29.40px;top:81.78px;" width="5" height="5" viewBox="0 0 5 5"><path d="M4.4 0.3 L4.4 4.4 L0.3 4.4Z" fill="#141414"/></svg>
<svg class="a" style="left:36.50px;top:79.38px;" width="10" height="8" viewBox="0 0 10 8"><defs><linearGradient id="dbg" x1="0" y1="0" x2="1" y2="1"><stop offset="0" stop-color="#7ea2e4"/><stop offset="0.5" stop-color="#3f6dd0"/><stop offset="1" stop-color="#5a7fd0"/></linearGradient></defs><rect x="0.4" y="0.4" width="9.2" height="7.2" rx="2.6" fill="url(#dbg)" stroke="#5577bb" stroke-width="0.6"/><path d="M1.2 3.2 Q2.5 2.2 4.2 3.6 Q6.5 5 8.8 3.4 L8.6 5.6 Q6.5 7.2 4 6.6 Q2 6.3 1.2 5.4Z" fill="#e6eef8" opacity="0.9"/><path d="M1.5 2.2 Q3 1 5 1.6" stroke="#c8d8f4" stroke-width="0.7" fill="none"/></svg>
<div class="tx" style="left:49.5px;top:81.58px;font-size:6.6px;color:#111">Statistiken</div>
<svg class="a" style="left:39.60px;top:90.16px;" width="4" height="6" viewBox="0 0 4 6"><path d="M0.6 0.6 L3.4 3 L0.6 5.4Z" fill="#fff" stroke="#a8a8a8" stroke-width="0.8"/></svg>
<svg class="a" style="left:46.80px;top:88.36px;" width="10" height="9" viewBox="0 0 10 9"><path d="M0.5 0.5 H5.6 L7.8 2.7 V8.3 H0.5Z" fill="#e4eaf6" stroke="#8c90b4" stroke-width="0.8"/><path d="M5.3 0.5 L7.8 3 H5.3Z" fill="#6c6c98"/><path d="M1.6 2.4 H4 M1.6 4 H4.4" stroke="#b8c4dc" stroke-width="0.6"/><path d="M4.6 4.2 H9.4 V8.6 H4.6Z" fill="#c8a438"/><path d="M4.8 4.6 H7.4 V8.2 H4.8Z" fill="#f8eca0"/></svg>
<div class="tx" style="left:59.7px;top:91.16px;font-size:6.6px;color:#111">Tagesstatistik</div>
<svg class="a" style="left:39.60px;top:99.74px;" width="4" height="6" viewBox="0 0 4 6"><path d="M0.6 0.6 L3.4 3 L0.6 5.4Z" fill="#fff" stroke="#a8a8a8" stroke-width="0.8"/></svg>
<svg class="a" style="left:46.80px;top:97.94px;" width="10" height="9" viewBox="0 0 10 9"><path d="M0.5 0.5 H5.6 L7.8 2.7 V8.3 H0.5Z" fill="#e4eaf6" stroke="#8c90b4" stroke-width="0.8"/><path d="M5.3 0.5 L7.8 3 H5.3Z" fill="#6c6c98"/><path d="M1.6 2.4 H4 M1.6 4 H4.4" stroke="#b8c4dc" stroke-width="0.6"/><path d="M4.6 4.2 H9.4 V8.6 H4.6Z" fill="#c8a438"/><path d="M4.8 4.6 H7.4 V8.2 H4.8Z" fill="#f8eca0"/></svg>
<div class="tx" style="left:59.7px;top:100.74px;font-size:6.6px;color:#111">Kunden</div>
<svg class="a" style="left:39.60px;top:109.32px;" width="4" height="6" viewBox="0 0 4 6"><path d="M0.6 0.6 L3.4 3 L0.6 5.4Z" fill="#fff" stroke="#a8a8a8" stroke-width="0.8"/></svg>
<svg class="a" style="left:46.80px;top:107.52px;" width="10" height="9" viewBox="0 0 10 9"><path d="M0.5 0.5 H5.6 L7.8 2.7 V8.3 H0.5Z" fill="#e4eaf6" stroke="#8c90b4" stroke-width="0.8"/><path d="M5.3 0.5 L7.8 3 H5.3Z" fill="#6c6c98"/><path d="M1.6 2.4 H4 M1.6 4 H4.4" stroke="#b8c4dc" stroke-width="0.6"/><path d="M4.6 4.2 H9.4 V8.6 H4.6Z" fill="#c8a438"/><path d="M4.8 4.6 H7.4 V8.2 H4.8Z" fill="#f8eca0"/></svg>
<div class="tx" style="left:59.7px;top:110.32px;font-size:6.6px;color:#111">Lieferanten</div>
<svg class="a" style="left:39.60px;top:118.90px;" width="4" height="6" viewBox="0 0 4 6"><path d="M0.6 0.6 L3.4 3 L0.6 5.4Z" fill="#fff" stroke="#a8a8a8" stroke-width="0.8"/></svg>
<svg class="a" style="left:46.80px;top:117.10px;" width="10" height="9" viewBox="0 0 10 9"><path d="M0.5 0.5 H5.6 L7.8 2.7 V8.3 H0.5Z" fill="#e4eaf6" stroke="#8c90b4" stroke-width="0.8"/><path d="M5.3 0.5 L7.8 3 H5.3Z" fill="#6c6c98"/><path d="M1.6 2.4 H4 M1.6 4 H4.4" stroke="#b8c4dc" stroke-width="0.6"/><path d="M4.6 4.2 H9.4 V8.6 H4.6Z" fill="#c8a438"/><path d="M4.8 4.6 H7.4 V8.2 H4.8Z" fill="#f8eca0"/></svg>
<div class="tx" style="left:59.7px;top:119.90px;font-size:6.6px;color:#111">Artikel</div>
<svg class="a" style="left:39.60px;top:128.48px;" width="4" height="6" viewBox="0 0 4 6"><path d="M0.6 0.6 L3.4 3 L0.6 5.4Z" fill="#fff" stroke="#a8a8a8" stroke-width="0.8"/></svg>
<svg class="a" style="left:46.80px;top:126.68px;" width="10" height="9" viewBox="0 0 10 9"><path d="M0.5 0.5 H5.6 L7.8 2.7 V8.3 H0.5Z" fill="#e4eaf6" stroke="#8c90b4" stroke-width="0.8"/><path d="M5.3 0.5 L7.8 3 H5.3Z" fill="#6c6c98"/><path d="M1.6 2.4 H4 M1.6 4 H4.4" stroke="#b8c4dc" stroke-width="0.6"/><path d="M4.6 4.2 H9.4 V8.6 H4.6Z" fill="#c8a438"/><path d="M4.8 4.6 H7.4 V8.2 H4.8Z" fill="#f8eca0"/></svg>
<div class="tx" style="left:59.7px;top:129.48px;font-size:6.6px;color:#111">Warengruppen</div>
<svg class="a" style="left:39.60px;top:138.06px;" width="4" height="6" viewBox="0 0 4 6"><path d="M0.6 0.6 L3.4 3 L0.6 5.4Z" fill="#fff" stroke="#a8a8a8" stroke-width="0.8"/></svg>
<svg class="a" style="left:46.80px;top:136.26px;" width="10" height="9" viewBox="0 0 10 9"><path d="M0.5 0.5 H5.6 L7.8 2.7 V8.3 H0.5Z" fill="#e4eaf6" stroke="#8c90b4" stroke-width="0.8"/><path d="M5.3 0.5 L7.8 3 H5.3Z" fill="#6c6c98"/><path d="M1.6 2.4 H4 M1.6 4 H4.4" stroke="#b8c4dc" stroke-width="0.6"/><path d="M4.6 4.2 H9.4 V8.6 H4.6Z" fill="#c8a438"/><path d="M4.8 4.6 H7.4 V8.2 H4.8Z" fill="#f8eca0"/></svg>
<div class="a" style="left:58px;top:136.36px;width:23px;height:9px;background:#3a67c4"></div>
<div class="tx" style="left:59.7px;top:139.06px;font-size:6.6px;color:#fff">Belege</div>
<svg class="a" style="left:39.60px;top:147.64px;" width="4" height="6" viewBox="0 0 4 6"><path d="M0.6 0.6 L3.4 3 L0.6 5.4Z" fill="#fff" stroke="#a8a8a8" stroke-width="0.8"/></svg>
<svg class="a" style="left:46.80px;top:145.84px;" width="10" height="9" viewBox="0 0 10 9"><path d="M0.5 0.5 H5.6 L7.8 2.7 V8.3 H0.5Z" fill="#e4eaf6" stroke="#8c90b4" stroke-width="0.8"/><path d="M5.3 0.5 L7.8 3 H5.3Z" fill="#6c6c98"/><path d="M1.6 2.4 H4 M1.6 4 H4.4" stroke="#b8c4dc" stroke-width="0.6"/><path d="M4.6 4.2 H9.4 V8.6 H4.6Z" fill="#c8a438"/><path d="M4.8 4.6 H7.4 V8.2 H4.8Z" fill="#f8eca0"/></svg>
<div class="tx" style="left:59.7px;top:148.64px;font-size:6.6px;color:#111">Positionen</div>
<svg class="a" style="left:39.60px;top:157.22px;" width="4" height="6" viewBox="0 0 4 6"><path d="M0.6 0.6 L3.4 3 L0.6 5.4Z" fill="#fff" stroke="#a8a8a8" stroke-width="0.8"/></svg>
<svg class="a" style="left:46.80px;top:155.42px;" width="10" height="9" viewBox="0 0 10 9"><path d="M0.5 0.5 H5.6 L7.8 2.7 V8.3 H0.5Z" fill="#e4eaf6" stroke="#8c90b4" stroke-width="0.8"/><path d="M5.3 0.5 L7.8 3 H5.3Z" fill="#6c6c98"/><path d="M1.6 2.4 H4 M1.6 4 H4.4" stroke="#b8c4dc" stroke-width="0.6"/><path d="M4.6 4.2 H9.4 V8.6 H4.6Z" fill="#c8a438"/><path d="M4.8 4.6 H7.4 V8.2 H4.8Z" fill="#f8eca0"/></svg>
<div class="tx" style="left:59.7px;top:158.22px;font-size:6.6px;color:#111">Lagerbuchungen</div>
<svg class="a" style="left:39.60px;top:166.80px;" width="4" height="6" viewBox="0 0 4 6"><path d="M0.6 0.6 L3.4 3 L0.6 5.4Z" fill="#fff" stroke="#a8a8a8" stroke-width="0.8"/></svg>
<svg class="a" style="left:46.80px;top:165.00px;" width="10" height="9" viewBox="0 0 10 9"><path d="M0.5 0.5 H5.6 L7.8 2.7 V8.3 H0.5Z" fill="#e4eaf6" stroke="#8c90b4" stroke-width="0.8"/><path d="M5.3 0.5 L7.8 3 H5.3Z" fill="#6c6c98"/><path d="M1.6 2.4 H4 M1.6 4 H4.4" stroke="#b8c4dc" stroke-width="0.6"/><path d="M4.6 4.2 H9.4 V8.6 H4.6Z" fill="#c8a438"/><path d="M4.8 4.6 H7.4 V8.2 H4.8Z" fill="#f8eca0"/></svg>
<div class="tx" style="left:59.7px;top:167.80px;font-size:6.6px;color:#111">Seriennummern</div>
<svg class="a" style="left:39.60px;top:176.38px;" width="4" height="6" viewBox="0 0 4 6"><path d="M0.6 0.6 L3.4 3 L0.6 5.4Z" fill="#fff" stroke="#a8a8a8" stroke-width="0.8"/></svg>
<svg class="a" style="left:46.80px;top:174.58px;" width="10" height="9" viewBox="0 0 10 9"><path d="M0.5 0.5 H5.6 L7.8 2.7 V8.3 H0.5Z" fill="#e4eaf6" stroke="#8c90b4" stroke-width="0.8"/><path d="M5.3 0.5 L7.8 3 H5.3Z" fill="#6c6c98"/><path d="M1.6 2.4 H4 M1.6 4 H4.4" stroke="#b8c4dc" stroke-width="0.6"/><path d="M4.6 4.2 H9.4 V8.6 H4.6Z" fill="#c8a438"/><path d="M4.8 4.6 H7.4 V8.2 H4.8Z" fill="#f8eca0"/></svg>
<div class="tx" style="left:59.7px;top:177.38px;font-size:6.6px;color:#111">Chargen</div>
<svg class="a" style="left:39.60px;top:185.96px;" width="4" height="6" viewBox="0 0 4 6"><path d="M0.6 0.6 L3.4 3 L0.6 5.4Z" fill="#fff" stroke="#a8a8a8" stroke-width="0.8"/></svg>
<svg class="a" style="left:46.80px;top:184.16px;" width="10" height="9" viewBox="0 0 10 9"><path d="M0.5 0.5 H5.6 L7.8 2.7 V8.3 H0.5Z" fill="#e4eaf6" stroke="#8c90b4" stroke-width="0.8"/><path d="M5.3 0.5 L7.8 3 H5.3Z" fill="#6c6c98"/><path d="M1.6 2.4 H4 M1.6 4 H4.4" stroke="#b8c4dc" stroke-width="0.6"/><path d="M4.6 4.2 H9.4 V8.6 H4.6Z" fill="#c8a438"/><path d="M4.8 4.6 H7.4 V8.2 H4.8Z" fill="#f8eca0"/></svg>
<div class="tx" style="left:59.7px;top:186.96px;font-size:6.6px;color:#111">Projekte</div>
<svg class="a" style="left:39.60px;top:195.54px;" width="4" height="6" viewBox="0 0 4 6"><path d="M0.6 0.6 L3.4 3 L0.6 5.4Z" fill="#fff" stroke="#a8a8a8" stroke-width="0.8"/></svg>
<svg class="a" style="left:46.80px;top:193.74px;" width="10" height="9" viewBox="0 0 10 9"><path d="M0.5 0.5 H5.6 L7.8 2.7 V8.3 H0.5Z" fill="#e4eaf6" stroke="#8c90b4" stroke-width="0.8"/><path d="M5.3 0.5 L7.8 3 H5.3Z" fill="#6c6c98"/><path d="M1.6 2.4 H4 M1.6 4 H4.4" stroke="#b8c4dc" stroke-width="0.6"/><path d="M4.6 4.2 H9.4 V8.6 H4.6Z" fill="#c8a438"/><path d="M4.8 4.6 H7.4 V8.2 H4.8Z" fill="#f8eca0"/></svg>
<div class="tx" style="left:59.7px;top:196.54px;font-size:6.6px;color:#111">Lieferadressen</div>
<svg class="a" style="left:39.60px;top:205.12px;" width="4" height="6" viewBox="0 0 4 6"><path d="M0.6 0.6 L3.4 3 L0.6 5.4Z" fill="#fff" stroke="#a8a8a8" stroke-width="0.8"/></svg>
<svg class="a" style="left:46.80px;top:203.32px;" width="10" height="9" viewBox="0 0 10 9"><path d="M0.5 0.5 H5.6 L7.8 2.7 V8.3 H0.5Z" fill="#e4eaf6" stroke="#8c90b4" stroke-width="0.8"/><path d="M5.3 0.5 L7.8 3 H5.3Z" fill="#6c6c98"/><path d="M1.6 2.4 H4 M1.6 4 H4.4" stroke="#b8c4dc" stroke-width="0.6"/><path d="M4.6 4.2 H9.4 V8.6 H4.6Z" fill="#c8a438"/><path d="M4.8 4.6 H7.4 V8.2 H4.8Z" fill="#f8eca0"/></svg>
<div class="tx" style="left:59.7px;top:206.12px;font-size:6.6px;color:#111">Vertreter</div>
<svg class="a" style="left:39.60px;top:214.70px;" width="4" height="6" viewBox="0 0 4 6"><path d="M0.6 0.6 L3.4 3 L0.6 5.4Z" fill="#fff" stroke="#a8a8a8" stroke-width="0.8"/></svg>
<svg class="a" style="left:46.80px;top:212.90px;" width="10" height="9" viewBox="0 0 10 9"><path d="M0.5 0.5 H5.6 L7.8 2.7 V8.3 H0.5Z" fill="#e4eaf6" stroke="#8c90b4" stroke-width="0.8"/><path d="M5.3 0.5 L7.8 3 H5.3Z" fill="#6c6c98"/><path d="M1.6 2.4 H4 M1.6 4 H4.4" stroke="#b8c4dc" stroke-width="0.6"/><path d="M4.6 4.2 H9.4 V8.6 H4.6Z" fill="#c8a438"/><path d="M4.8 4.6 H7.4 V8.2 H4.8Z" fill="#f8eca0"/></svg>
<div class="tx" style="left:59.7px;top:215.70px;font-size:6.6px;color:#111">Adress/Artikel</div>
<svg class="a" style="left:39.60px;top:224.28px;" width="4" height="6" viewBox="0 0 4 6"><path d="M0.6 0.6 L3.4 3 L0.6 5.4Z" fill="#fff" stroke="#a8a8a8" stroke-width="0.8"/></svg>
<svg class="a" style="left:46.80px;top:222.48px;" width="10" height="9" viewBox="0 0 10 9"><path d="M0.5 0.5 H5.6 L7.8 2.7 V8.3 H0.5Z" fill="#e4eaf6" stroke="#8c90b4" stroke-width="0.8"/><path d="M5.3 0.5 L7.8 3 H5.3Z" fill="#6c6c98"/><path d="M1.6 2.4 H4 M1.6 4 H4.4" stroke="#b8c4dc" stroke-width="0.6"/><path d="M4.6 4.2 H9.4 V8.6 H4.6Z" fill="#c8a438"/><path d="M4.8 4.6 H7.4 V8.2 H4.8Z" fill="#f8eca0"/></svg>
<div class="tx" style="left:59.7px;top:225.28px;font-size:6.6px;color:#111">Adress/Warengruppen</div>
<svg class="a" style="left:28.90px;top:233.86px;" width="4" height="6" viewBox="0 0 4 6"><path d="M0.6 0.6 L3.4 3 L0.6 5.4Z" fill="#fff" stroke="#a8a8a8" stroke-width="0.8"/></svg>
<svg class="a" style="left:36.50px;top:232.36px;" width="10" height="8" viewBox="0 0 10 8"><rect x="0.4" y="0.4" width="9.2" height="7.2" rx="1.8" fill="#5a7ed4" stroke="#4a64a8" stroke-width="0.6"/><path d="M1 4 Q3 2 5 3 Q7 4 9 2.5 V7 H1Z" fill="#c4d2ee"/><path d="M2.6 6.8 L8 2" stroke="#d8c830" stroke-width="1.5"/><path d="M2.2 7.2 L3 6.2" stroke="#404040" stroke-width="0.8"/></svg>
<div class="tx" style="left:49.7px;top:234.86px;font-size:6.6px;color:#111">Stammdaten</div>
</div></body></html>
